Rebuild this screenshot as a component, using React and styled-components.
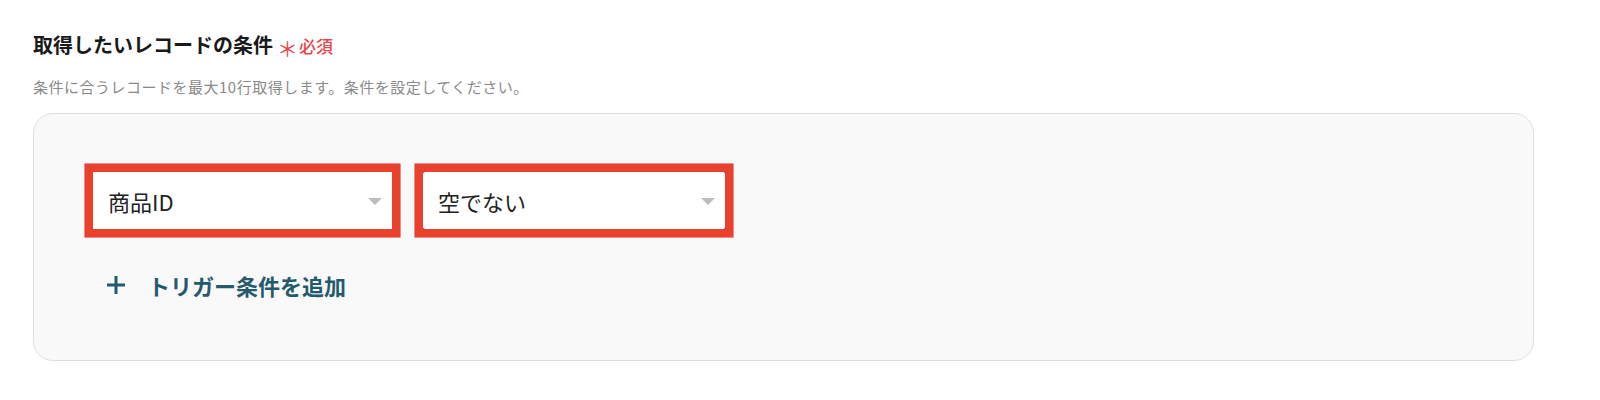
import React from "react";
import styled, { createGlobalStyle } from "styled-components";

const Global = createGlobalStyle`
  html, body { margin: 0; padding: 0; background: #ffffff; }
  body { font-family: "Noto Sans CJK JP", "Noto Sans", sans-serif; }
`;

const Page = styled.div`
  padding: 29px 66px 0 33px;
  box-sizing: border-box;
  width: 1600px;
`;

const TitleRow = styled.div`
  display: flex;
  align-items: baseline;
  line-height: 30px;
`;

const Title = styled.h2`
  margin: 0;
  font-size: 20px;
  font-weight: 700;
  color: #1a1a1a;
  line-height: 30px;
`;

const Required = styled.span`
  margin-left: 4px;
  color: #e5484d;
  font-size: 17px;
  font-weight: 500;
  display: inline-flex;
  align-items: baseline;
  gap: 1px;
`;

const Star = styled.span`
  font-size: 21px;
  position: relative;
  top: 4px;
  font-weight: 400;
`;

const Description = styled.p`
  margin: 15px 0 0;
  font-size: 15px;
  line-height: 22px;
  color: #8a8a8a;
  letter-spacing: 0.5px;
`;

const Card = styled.div`
  margin-top: 15px;
  width: 1501px;
  height: 248px;
  box-sizing: border-box;
  border: 1px solid #dcdfe3;
  border-radius: 20px;
  background: #f9f9f9;
  padding: 56px 57px;
  display: flex;
  flex-direction: column;
`;

const ConditionRow = styled.div`
  display: flex;
  gap: 27px;
`;

const Field = styled.div`
  position: relative;
  width: ${(p) => p.$w}px;
  height: 61px;
  box-sizing: border-box;
  background: #fff;
  border: 1px solid ${(p) => (p.$focused ? "#1d4ed8" : "#cfcfcf")};
  border-radius: ${(p) => (p.$focused ? 7 : 3)}px;
  display: flex;
  align-items: center;
  justify-content: space-between;
  padding: 0 11px 0 16px;
  font-size: 22px;
  color: #222;
`;

const Highlight = styled.div`
  position: absolute;
  inset: -7px;
  border: 8px solid #e9412b;
  box-shadow: 0 0 0 0.5px #d9221a;
  pointer-events: none;
`;

const Caret = styled.span`
  width: 0;
  height: 0;
  border-left: 7px solid transparent;
  border-right: 7px solid transparent;
  border-top: 7px solid #bdbdbd;
  margin-top: 2px;
`;

const AddButton = styled.button`
  margin-top: 42px;
  margin-left: 15px;
  display: flex;
  align-items: center;
  gap: 22px;
  background: none;
  border: none;
  padding: 0;
  cursor: pointer;
  color: #245a6e;
  font-family: inherit;
  font-size: 22px;
  font-weight: 700;
  line-height: 24px;
  align-self: flex-start;
`;

const Select = ({ value, width, focused }) => (
  <Field $w={width} $focused={focused}>
    <span>{value}</span>
    <Caret />
    <Highlight />
  </Field>
);

export default function App() {
  return (
    <>
      <Global />
      <Page>
        <TitleRow>
          <Title>取得したいレコードの条件</Title>
          <Required>
            <Star>＊</Star>
            必須
          </Required>
        </TitleRow>
        <Description>
          条件に合うレコードを最大10行取得します。条件を設定してください。
        </Description>
        <Card>
          <ConditionRow>
            <Select value="商品ID" width={303} />
            <Select value="空でない" width={306} focused />
          </ConditionRow>
          <AddButton>
            <svg width="20" height="20" viewBox="0 0 20 20">
              <path d="M10 1v18M1 10h18" stroke="#245a6e" strokeWidth="3" />
            </svg>
            トリガー条件を追加
          </AddButton>
        </Card>
      </Page>
    </>
  );
}
